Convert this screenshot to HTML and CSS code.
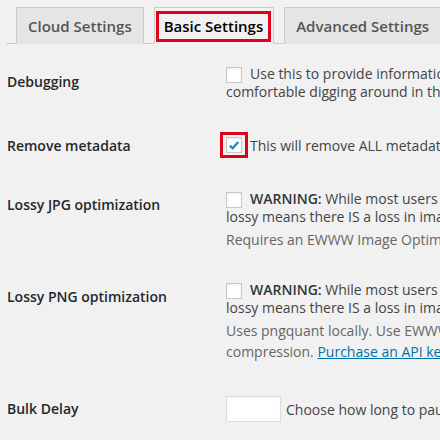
FILE: index.html
```html
<!DOCTYPE html>
<html>
<head>
<meta charset="utf-8">
<link rel="stylesheet" href="styles.css">
</head>
<body>
<div class="page">
  <div class="tabs">
    <div class="tab">Cloud Settings</div>
    <div class="tab active"><span class="mark">Basic Settings</span></div>
    <div class="tab">Advanced Settings</div>
  </div>
  <div class="form">
    <div class="row r1">
      <div class="label">Debugging</div>
      <div class="field">
        <p class="line"><span class="cb"></span>Use this to provide information for support purposes, or if you feel<br>comfortable digging around in the settings to fix a problem.</p>
      </div>
    </div>
    <div class="row r2">
      <div class="label">Remove metadata</div>
      <div class="field">
        <p class="line"><span class="cbmark"><span class="cb checked"><svg viewBox="0 0 16 16" width="16" height="16"><path d="M3.8 8.6 L6.7 11.3 L12.2 5" fill="none" stroke="#1e8cbe" stroke-width="2.4"/></svg></span></span>This will remove ALL metadata: EXIF and comments.</p>
      </div>
    </div>
    <div class="row r3">
      <div class="label">Lossy JPG optimization</div>
      <div class="field">
        <p class="line"><span class="cb"></span><b>WARNING:</b> While most users will not notice a difference in image quality,<br>lossy means there IS a loss in image quality.</p>
        <p class="desc">Requires an EWWW Image Optimizer Cloud Subscription.</p>
      </div>
    </div>
    <div class="row r4">
      <div class="label">Lossy PNG optimization</div>
      <div class="field">
        <p class="line"><span class="cb"></span><b>WARNING:</b> While most users will not notice a difference in image quality,<br>lossy means there IS a loss in image quality.</p>
        <p class="desc">Uses pngquant locally. Use EWWW Image Optimizer Cloud for even better<br>compression. <a href="#">Purchase an API key.</a></p>
      </div>
    </div>
    <div class="row r5">
      <div class="label">Bulk Delay</div>
      <div class="field">
        <p class="line"><span class="input"></span>Choose how long to pause between images (in seconds, 0 = disabled)</p>
      </div>
    </div>
  </div>
</div>
</body>
</html>
```
FILE: styles.css
```css
html, body {
  margin: 0;
  padding: 0;
  background: #f1f1f1;
  overflow: hidden;
}
body {
  font-family: "Open Sans", "DejaVu Sans", sans-serif;
  font-size: 14px;
  color: #444;
}
.page {
  width: 440px;
  height: 440px;
  overflow: hidden;
  padding-top: 7px;
  box-sizing: border-box;
}
.tabs {
  display: flex;
  gap: 10px;
  margin-left: 6px;
  padding-left: 10px;
  border-bottom: 1px solid #ccc;
  white-space: nowrap;
  width: 600px;
}
.tab {
  flex: none;
  font-weight: 600;
  font-size: 15px;
  line-height: 24px;
  padding: 6px 11px;
  background: #e5e5e5;
  border: 1px solid #ccc;
  border-bottom: none;
  color: #555;
  margin-bottom: -1px;
}
.tab.active {
  background: #f1f1f1;
  border-bottom: 1px solid #f1f1f1;
  color: #000;
  padding: 3px 2px 0 1px;
}
.mark {
  display: block;
  border: 3px solid #e0001b;
  padding: 0 5px 0 5px;
  line-height: 25px;
}
.form {
  padding-left: 7px;
}
.row {
  display: grid;
  grid-template-columns: 219px 1fr;
  align-items: start;
  box-sizing: border-box;
}
.label {
  font-weight: 600;
  color: #23282d;
  line-height: 20px;
  white-space: nowrap;
}
.field {
  white-space: nowrap;
}
.line {
  margin: 0;
  line-height: 18px;
}
.desc {
  margin: 3px 0 0;
  color: #666;
  line-height: 21px;
}
.desc a { color: #0073aa; }
b { font-weight: 600; color: #32373c; }
.cb {
  display: inline-block;
  width: 16px;
  height: 16px;
  box-sizing: border-box;
  background: #fff;
  border: 1px solid #c8c8c8;
  box-shadow: inset 0 1px 2px rgba(0,0,0,.08);
  vertical-align: -3px;
  margin-bottom: -1px;
  margin-right: 8px;
  position: relative;
}
.cb svg { position: absolute; left: -1px; top: -1px; }
.cbmark {
  display: inline-block;
  border: 3px solid #e0001b;
  padding: 2px 3px;
  margin-left: -6px;
  margin-right: 2px;
  vertical-align: -7px;
}
.cbmark .cb { display: block; margin: 0; }
.input {
  display: inline-block;
  width: 55px;
  height: 26px;
  box-sizing: border-box;
  background: #fff;
  border: 1px solid #ddd;
  box-shadow: inset 0 1px 2px rgba(0,0,0,.05);
  vertical-align: -7px;
  margin-right: 5px;
}
.r1 { height: 75px; }
.r1 .label { padding-top: 28px; }
.r1 .field { padding-top: 21px; }
.r2 { height: 55px; }
.r2 .label { padding-top: 17px; }
.r2 .field { padding-top: 13px; }
.r3 { height: 90px; }
.r3 .label { padding-top: 21px; }
.r3 .field { padding-top: 16px; }
.r4 { height: 115px; }
.r4 .label { padding-top: 23px; }
.r4 .field { padding-top: 17px; }
.r5 { height: 60px; }
.r5 .label { padding-top: 20px; }
.r5 .field { padding-top: 17px; }
```
